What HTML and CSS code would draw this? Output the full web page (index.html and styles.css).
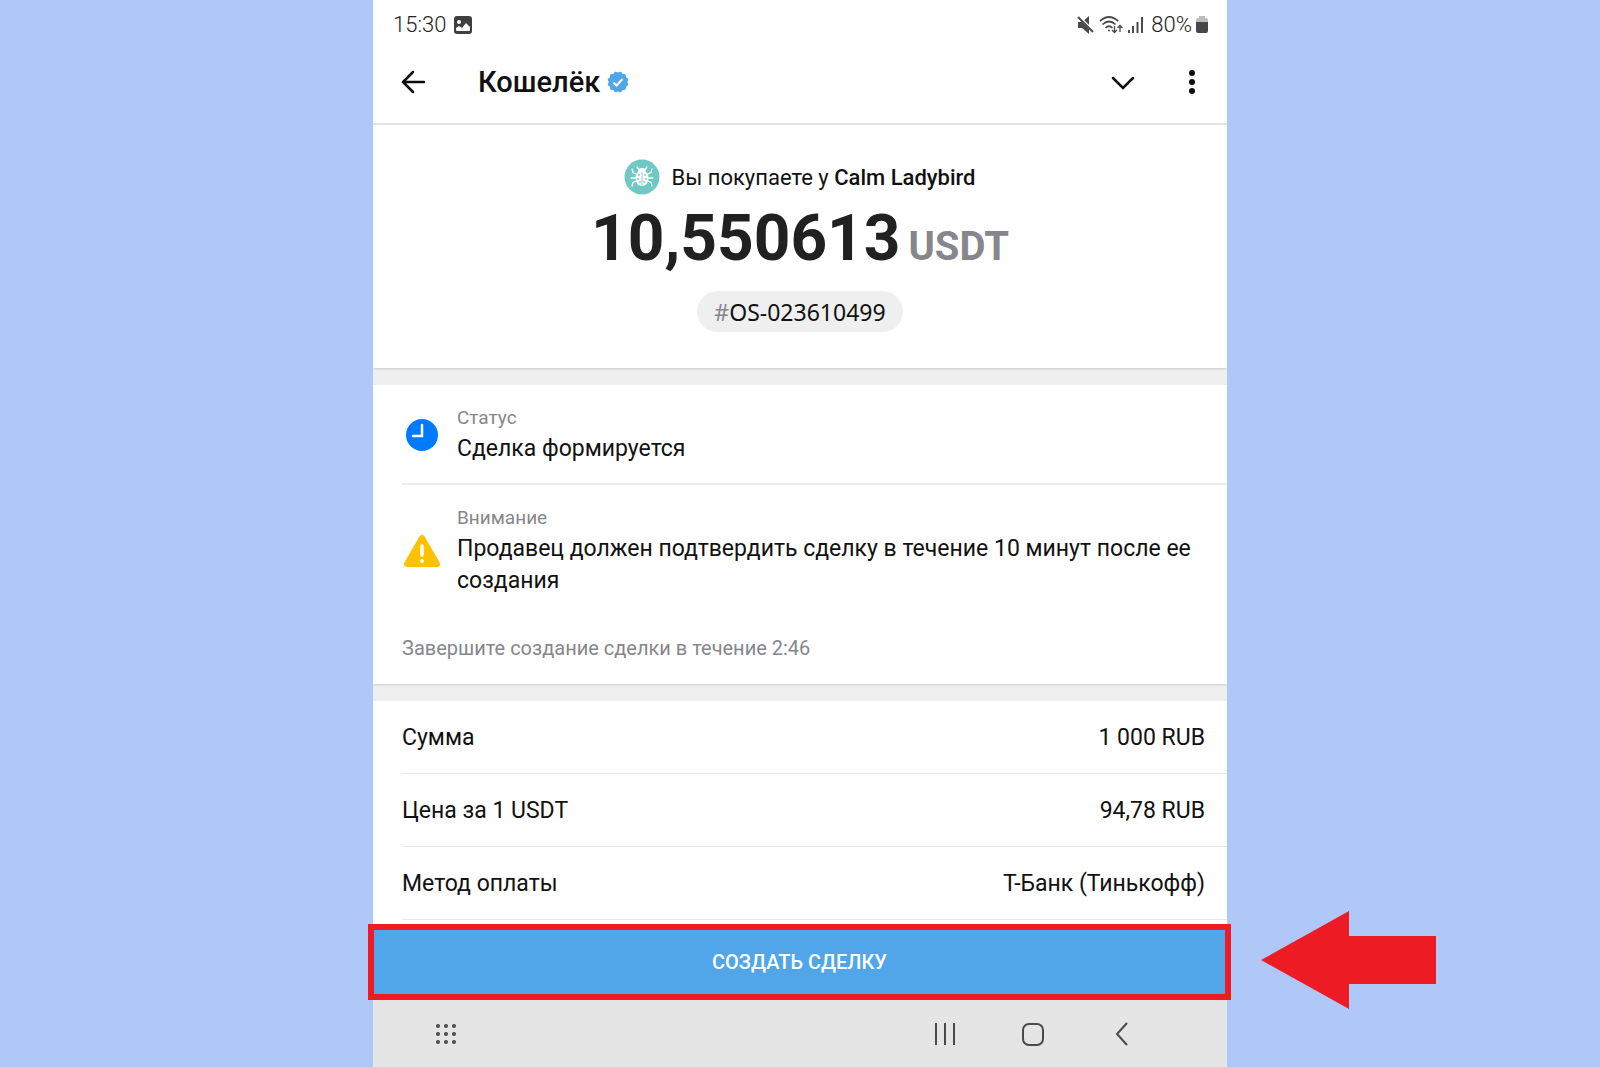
FILE: index.html
```html
<!DOCTYPE html>
<html lang="ru">
<head>
    <meta charset="UTF-8">
    <meta name="viewport" content="width=device-width, initial-scale=1.0">
    <title>Кошелёк</title>
    <link rel="stylesheet" href="styles.css">
</head>
<body>
    <div class="phone">
        <div class="status-bar">
            <div class="status-left">
                <span>15:30</span>
                <svg width="18" height="18" viewBox="0 0 18 18">
                    <rect width="18" height="18" rx="3" fill="#3f3f41"/>
                    <circle cx="5" cy="6" r="2" fill="#fff"/>
                    <path d="M2 14v-2l3-2 3 2 4-5 4 4v3q0 1-1 1H3q-1 0-1-1z" fill="#fff"/>
                </svg>
            </div>
            <div class="status-right">
                <svg width="18" height="18" viewBox="0 0 18 18">
                    <path d="M1 6h4l7-6v18l-7-6H1z" fill="#4a4a4c"/>
                    <path d="M1 0l17 17" stroke="#fff" stroke-width="3"/>
                    <path d="M1 1l15 15" stroke="#4a4a4c" stroke-width="2"/>
                </svg>
                <svg width="24" height="18" viewBox="0 0 24 18" fill="none" stroke="#4a4a4c" stroke-width="1.7">
                    <path d="M1 5q9-8 18 0M3.500 8.500q6.500-6 13 0M6.500 12q3.500-3.500 7 0"/>
                    <circle cx="10" cy="14.500" r="1" fill="#4a4a4c" stroke="none"/>
                    <path d="M15.500 10v6.500M13 14l2.500 2.500L18 14M21 16v-6.500M18.500 12L21 9.500l2.500 2.500" stroke-width="1.300"/>
                </svg>
                <svg width="18" height="18" viewBox="0 0 18 18" fill="#4a4a4c">
                    <path d="M1 14h2v3H1zM5 10h2v7H5zM9.500 6h2v11h-2zM14 1h2v16h-2z"/>
                </svg>
                <span class="battery-level">80%</span>
                <svg width="12" height="18" viewBox="0 0 12 18">
                    <path d="M3 0h6v2h1q2 0 2 2v4H0V4q0-2 2-2h1z" fill="#bdbdbf"/>
                    <path d="M0 6h12v9q0 2-2 2H2q-2 0-2-2z" fill="#474749"/>
                </svg>
            </div>
        </div>

        <header class="header">
            <button class="icon-btn" aria-label="Назад">
                <svg width="26" height="26" viewBox="0 0 26 26" fill="none" stroke="#0b0b0b" stroke-width="2.500" stroke-linecap="round">
                    <path d="M24 13H3M13 3L3 13l10 10"/>
                </svg>
            </button>
            <h1>Кошелёк</h1>
            <svg class="verified" width="22" height="22" viewBox="0 0 22 22">
                <g fill="#4fa6ea">
                    <rect x="3" y="3" width="16" height="16" rx="2"/>
                    <rect x="3" y="3" width="16" height="16" rx="2" transform="rotate(30 11 11)"/>
                    <rect x="3" y="3" width="16" height="16" rx="2" transform="rotate(60 11 11)"/>
                </g>
                <path d="M6.500 11.500l3 3 6-6.500" fill="none" stroke="#fff" stroke-width="2"/>
            </svg>
            <div class="header-actions">
                <button class="icon-btn" aria-label="Свернуть">
                    <svg width="26" height="26" viewBox="0 0 26 26" fill="none" stroke="#0b0b0b" stroke-width="2.500" stroke-linecap="round">
                        <path d="M3 9l10 10L23 9"/>
                    </svg>
                </button>
                <button class="icon-btn" aria-label="Меню">
                    <svg width="26" height="26" viewBox="0 0 26 26" fill="#0b0b0b">
                        <circle cx="13" cy="4" r="3"/>
                        <circle cx="13" cy="13" r="3"/>
                        <circle cx="13" cy="22" r="3"/>
                    </svg>
                </button>
            </div>
        </header>

        <main>
            <section class="summary">
                <div class="seller">
                    <svg width="36" height="36" viewBox="0 0 36 36">
                        <circle cx="18" cy="18" r="17.500" fill="#6fc8c4"/>
                        <g fill="none" stroke="#fff" stroke-width="1.300" stroke-linecap="round">
                            <path d="M13 8l2 2.500h6L23 8M12 15l-3-1.500L8 10M24 15l3-1.500 1-3.500M12 19H7M24 19h5M12 22l-3 1.500L8 27M24 22l3 1.500 1 3.500"/>
                        </g>
                        <path d="M14 13q0-4 4-4t4 4z" fill="#fff"/>
                        <path d="M17.600 13v14q-6-1-6-8 0-4 2-6zM18.400 13v14q6-1 6-8 0-4-2-6z" fill="#fff"/>
                        <g fill="#6fc8c4">
                            <circle cx="15" cy="16" r=".9"/>
                            <circle cx="14" cy="20" r=".9"/>
                            <circle cx="16" cy="23" r=".9"/>
                            <circle cx="21" cy="16" r=".9"/>
                            <circle cx="22" cy="20" r=".9"/>
                            <circle cx="20" cy="23" r=".9"/>
                        </g>
                    </svg>
                    <p>Вы покупаете у <b>Calm Ladybird</b></p>
                </div>
                <p class="amount">10,550613 <span class="currency">USDT</span></p>
                <button class="order-id"><span>#</span>OS-023610499</button>
            </section>

            <section class="details">
                <div class="detail">
                    <svg width="40" height="40" viewBox="0 0 40 40">
                        <circle cx="20" cy="20" r="16" fill="#007aff"/>
                        <path d="M20 10v11h-9" fill="none" stroke="#fff" stroke-width="2.500" stroke-linecap="round"/>
                    </svg>
                    <div>
                        <p class="label">Статус</p>
                        <p class="value">Сделка формируется</p>
                    </div>
                </div>
                <div class="detail">
                    <svg width="40" height="40" viewBox="0 0 40 40">
                        <path d="M20 7L5 33h30z" fill="#fcc200" stroke="#fcc200" stroke-width="6" stroke-linejoin="round"/>
                        <path d="M20 15v9" stroke="#fff" stroke-width="3.500" stroke-linecap="round"/>
                        <circle cx="20" cy="30" r="2" fill="#fff"/>
                    </svg>
                    <div>
                        <p class="label">Внимание</p>
                        <p class="value">Продавец должен подтвердить сделку в течение 10 минут после ее создания</p>
                    </div>
                </div>
                <p class="timer">Завершите создание сделки в течение 2:46</p>
            </section>

            <dl class="rows">
                <div class="row">
                    <dt>Сумма</dt>
                    <dd>1 000 RUB</dd>
                </div>
                <div class="row">
                    <dt>Цена за 1 USDT</dt>
                    <dd>94,78 RUB</dd>
                </div>
                <div class="row">
                    <dt>Метод оплаты</dt>
                    <dd>Т-Банк (Тинькофф)</dd>
                </div>
            </dl>
        </main>

        <div class="highlight">
            <button class="create-btn">СОЗДАТЬ СДЕЛКУ</button>
            <svg class="pointer" width="175" height="98" viewBox="0 0 175 98">
                <path d="M0 49L88 0v25h87v48H88v25z" fill="#ed1c24"/>
            </svg>
        </div>

        <nav class="nav-bar">
            <button class="icon-btn apps" aria-label="Приложения">
                <svg width="26" height="26" viewBox="0 0 26 26" fill="#4a4a4a">
                    <circle cx="5" cy="5" r="2"/><circle cx="13" cy="5" r="2"/><circle cx="21" cy="5" r="2"/>
                    <circle cx="5" cy="13" r="2"/><circle cx="13" cy="13" r="2"/><circle cx="21" cy="13" r="2"/>
                    <circle cx="5" cy="21" r="2"/><circle cx="13" cy="21" r="2"/><circle cx="21" cy="21" r="2"/>
                </svg>
            </button>
            <button class="icon-btn" aria-label="Недавние">
                <svg width="26" height="26" viewBox="0 0 26 26" stroke="#4a4a4a" stroke-width="2">
                    <path d="M3 2v22M12 2v22M21 2v22"/>
                </svg>
            </button>
            <button class="icon-btn" aria-label="Главный экран">
                <svg width="26" height="26" viewBox="0 0 26 26" fill="none" stroke="#4a4a4a" stroke-width="2">
                    <rect x="2" y="3" width="20" height="21" rx="6"/>
                </svg>
            </button>
            <button class="icon-btn" aria-label="Назад">
                <svg width="26" height="26" viewBox="0 0 26 26" fill="none" stroke="#4a4a4a" stroke-width="2">
                    <path d="M18 2L8 13l10 11"/>
                </svg>
            </button>
        </nav>
    </div>
</body>
</html>
```
FILE: styles.css
```css
* {
  box-sizing: border-box;
}

body {
  font-family: Roboto, "Liberation Sans", sans-serif;
  background-color: #b0c8f8;
  color: #111;
  margin: 0;
  overflow-x: hidden;
}

h1, p, dl, dd {
  margin: 0;
}

svg {
  display: block;
  flex: none;
}

button {
  font-family: inherit;
  border: none;
  cursor: pointer;
}

.phone {
  display: flex;
  flex-direction: column;
  max-width: 854px;
  min-height: 100vh;
  margin: 0 auto;
  background-color: #fff;
}

/* status bar */
.status-bar {
  display: flex;
  justify-content: space-between;
  height: 43px;
  padding: 6px 19px 0 20px;
  font-size: 22px;
  font-weight: 300;
  color: #222;
}

.status-left, .status-right {
  display: flex;
  align-items: center;
}

.status-left {
  gap: 8px;
}

.status-right {
  gap: 4px;
}

.battery-level {
  margin-left: 2px;
}

/* header */
.header {
  display: flex;
  align-items: center;
  height: 82px;
  padding: 0 22px 2px 27px;
  border-bottom: 2px solid #e2e2e2;
}

.icon-btn {
  padding: 0;
  background: none;
}

.header h1 {
  margin-left: 52px;
  font-size: 29px;
  font-weight: 500;
}

.verified {
  margin-left: 7px;
}

.header-actions {
  display: flex;
  gap: 43px;
  margin-left: auto;
}

main {
  display: flex;
  flex-direction: column;
  gap: 17px;
  background-color: #efefef;
}

.summary, .details, .rows {
  background-color: #fff;
}

.summary, .details {
  box-shadow: 0 1px 2px rgba(0, 0, 0, 0.15);
  clip-path: inset(0 0 -4px);
}

/* summary */
.summary {
  display: flex;
  flex-direction: column;
  align-items: center;
  padding: 34px 20px 36px;
}

.seller {
  display: flex;
  align-items: center;
  gap: 11px;
  font-size: 22px;
}

.seller b {
  font-weight: 500;
}

.amount {
  margin-top: 4px;
  font-size: 64px;
  font-weight: 700;
  line-height: 80px;
  color: #212121;
}

.currency {
  margin-left: -8px;
  font-size: 40px;
  color: #85878c;
}

.order-id {
  height: 41px;
  margin-top: 4px;
  padding: 0 17px;
  border-radius: 21px;
  background-color: #efefef;
  font-family: "Noto Sans", sans-serif;
  font-size: 23px;
  color: #111;
}

.order-id span {
  color: #85878c;
}

/* details */
.detail {
  display: flex;
  align-items: center;
  gap: 15px;
  margin-left: 29px;
  padding: 20px 24px 18px 0;
}

.detail + .detail {
  border-top: 2px solid #ececec;
}

.label {
  margin-bottom: 2px;
  font-size: 19px;
  line-height: 26px;
  color: #85878c;
}

.value {
  font-size: 23px;
  line-height: 32px;
}

.timer {
  padding: 21px 29px 24px;
  font-size: 20px;
  line-height: 24px;
  color: #85878c;
}

/* deal rows */
.row {
  display: flex;
  align-items: center;
  justify-content: space-between;
  height: 73px;
  margin-left: 29px;
  padding-right: 22px;
  border-bottom: 1px solid #e8e8e8;
  font-size: 23px;
}

/* create button */
.highlight {
  position: relative;
  margin: 4px -4px 0 -5px;
  border: 6px solid #ed1c24;
}

.create-btn {
  display: block;
  width: 100%;
  height: 64px;
  background-color: #50a6e9;
  font-size: 20px;
  font-weight: 500;
  color: #fff;
}

.pointer {
  position: absolute;
  top: -19px;
  left: calc(100% + 36px);
}

/* bottom navigation */
.nav-bar {
  display: flex;
  flex: 1;
  align-items: center;
  gap: 62px;
  min-height: 66px;
  padding: 0 92px 0 60px;
  background-color: #e5e5e5;
}

.apps {
  margin-right: auto;
}
```
